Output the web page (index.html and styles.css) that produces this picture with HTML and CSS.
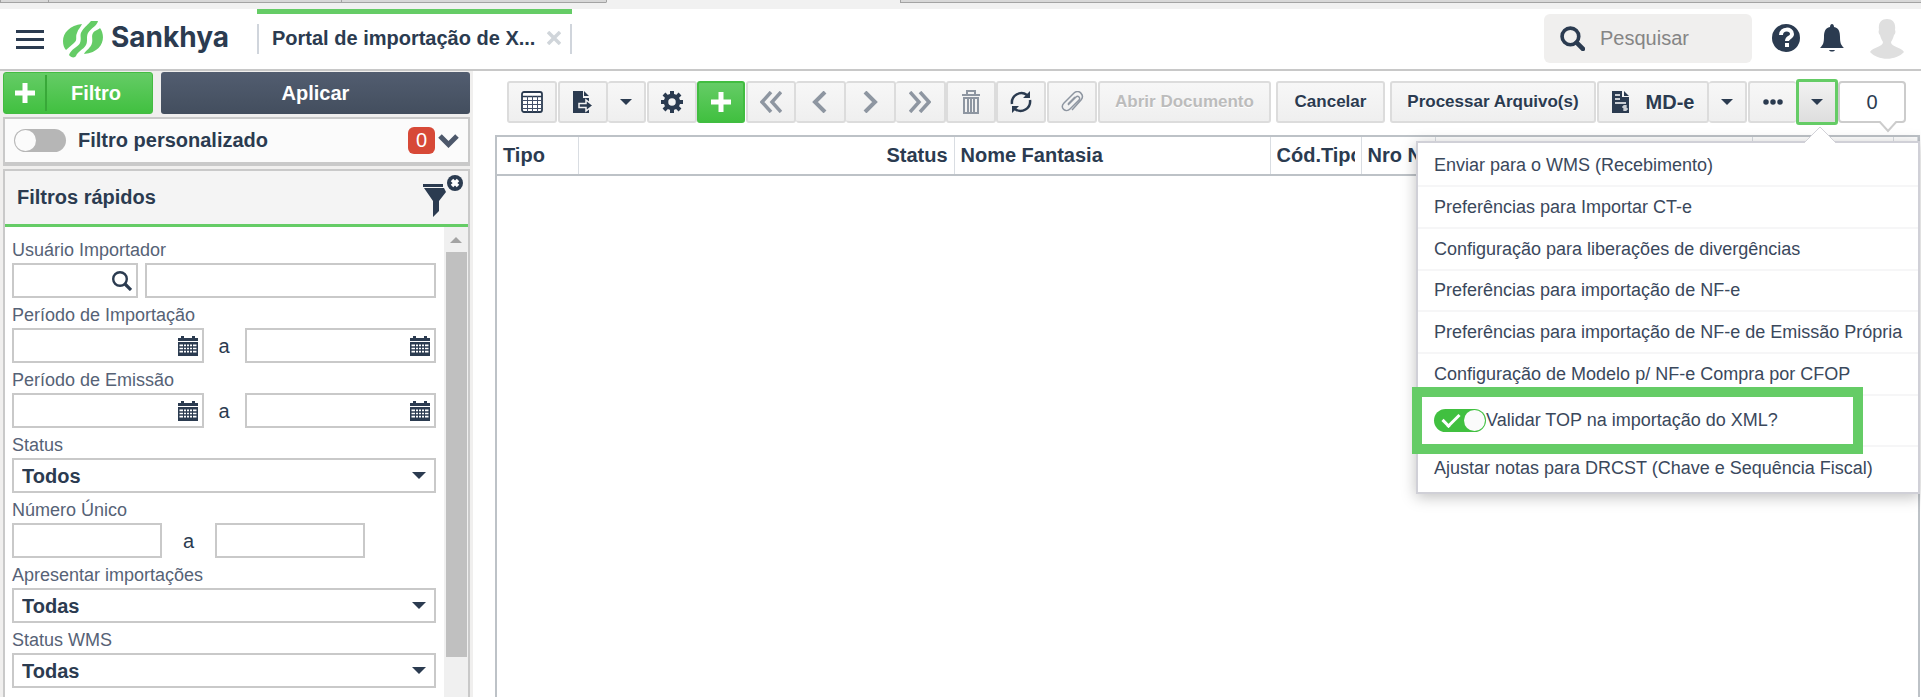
FILE: index.html
```html
<!DOCTYPE html>
<html lang="pt-BR">
<head>
<meta charset="utf-8">
<title>Portal de importação de XML</title>
<link rel="stylesheet" href="styles.css">
</head>
<body>
<svg class="sprite" aria-hidden="true">
  <symbol id="calendar" viewBox="0 0 20 20"><path fill="currentColor" d="M0 2h3V0h3v2h8V0h3v2h3v3H0zM0 6h20v14H0z"/><path stroke="#fff" d="M1.500 9.500h17M1.500 12.500h17M1.500 15.500h17" stroke-width="2"/><path stroke="currentColor" d="M5.500 8v10M8.500 8v10M11.500 8v10M14.500 8v10M1 11h18M1 14h18"/></symbol>
  <symbol id="search" viewBox="0 0 24 24"><circle cx="10" cy="10" r="8" fill="none" stroke="currentColor" stroke-width="3.500"/><path d="m16 16 6 6" stroke="currentColor" stroke-width="4.500" stroke-linecap="round"/></symbol>
  <symbol id="lookup" viewBox="0 0 20 20"><circle cx="8" cy="8" r="6.800" fill="none" stroke="currentColor" stroke-width="2.400"/><path d="m13 13 6 6" stroke="currentColor" stroke-width="3.200"/></symbol>
  <symbol id="caret" viewBox="0 0 12 6"><path d="M0 0h12L6 6z" fill="currentColor"/></symbol>
  <symbol id="plus" viewBox="0 0 22 22"><path d="M11 1v20M1 11h20" stroke="currentColor" stroke-width="5"/></symbol>
</svg>
<div class="window-edge"><span></span><span></span><span></span><span></span><span></span></div>
<header class="topbar">
  <button class="menu" aria-label="Menu"><i></i><i></i><i></i></button>
  <a class="brand" href="#">
    <svg width="42" height="38" viewBox="0 0 42 38" aria-hidden="true"><g fill="#65cc66"><path d="M20 4C8 5 1 13 1 21c0 4 1 7 3 9l8-7c4-3 1-6 3-10 1-4 4-6 5-9z"/><path d="M29 1h7c-1 5-7 7-10 12-2 4 0 8-2 12-3 5-8 6-10 11-1 2-5 2-7-1 2-6 9-8 11-12 2-5-1-8 2-12 3-5 6-6 9-10z"/><path d="M38 8c6 8 4 24-16 26 2-4 7-6 8-11 1-4-1-7 1-10s5-3 7-5z"/></g></svg>
    <span>Sankhya</span>
  </a>
  <div class="tab"><div class="tab-body"><span>Portal de importação de X...</span><button aria-label="Fechar aba"><svg width="14" height="14" viewBox="0 0 14 14"><path d="m1 1 12 12M13 1 1 13" stroke="#d0d5da" stroke-width="3.500"/></svg></button></div></div>
  <label class="search"><svg width="25" height="25" aria-hidden="true"><use href="#search"/></svg><input type="text" placeholder="Pesquisar" aria-label="Pesquisar"></label>
  <button class="top-icon" aria-label="Ajuda"><svg width="28" height="28" viewBox="0 0 28 28"><circle cx="14" cy="14" r="14" fill="#2b3b50"/><path d="M9 11c0-7 11-7 11-1 0 4-5 3-5 7" fill="none" stroke="#fff" stroke-width="4"/><path d="M13 19h4v4h-4z" fill="#fff"/></svg></button>
  <button class="top-icon" aria-label="Notificações"><svg width="24" height="28" viewBox="0 0 24 28"><path fill="#2b3b50" d="M10 3c0-4 4-4 4 0 5 1 6 5 6 10 0 6 1 8 4 11H0c3-3 4-5 4-11C4 8 5 4 10 3zM9 26h6c-1 2-5 2-6 0z"/></svg></button>
  <button class="avatar" aria-label="Usuário"><svg width="34" height="40" viewBox="0 0 34 40"><path fill="#dfdfdf" d="M17 0c6 0 9 4 8 11 1 2 0 4-1 5-1 4-2 5-3 7 0 5 10 5 13 10-8 9-26 9-34 0 3-5 13-5 13-10-1-2-2-3-3-7-1-1-2-3-1-5C8 4 11 0 17 0z"/></svg></button>
</header>
<div class="workspace">
  <aside class="sidebar">
    <div class="actions">
      <button class="add-filter"><svg width="22" height="22" aria-hidden="true"><use href="#plus"/></svg><span>Filtro</span></button>
      <button class="apply">Aplicar</button>
    </div>
    <section class="custom-filter">
      <input type="checkbox" class="switch" id="custom"><label for="custom">Filtro personalizado</label>
      <span class="count">0</span>
      <svg width="21" height="15" viewBox="0 0 21 15"><path d="m2 3 8.500 8.500L19 3" fill="none" stroke="#4d586b" stroke-width="5"/></svg>
    </section>
    <section class="quick">
      <header class="quick-head"><h2>Filtros rápidos</h2>
        <button aria-label="Limpar filtros"><svg width="40" height="42" viewBox="0 0 40 42"><path fill="#2b3b50" d="M0 9h20v3H0zM1 13h20l2 4-7 9v10l-6 6V26z"/><circle cx="32" cy="8" r="8" fill="#2b3b50"/><path d="m29 5 6 6m0-6-6 6" stroke="#fff" stroke-width="3.500"/></svg></button>
      </header>
      <div class="quick-body">
        <form class="fields">
          <div class="field"><label for="user">Usuário Importador</label>
            <div class="row lookup"><span class="box code"><input id="user" type="text"><svg width="20" height="20"><use href="#lookup"/></svg></span><span class="box"><input type="text" aria-label="Nome do usuário"></span></div></div>
          <div class="field"><label for="imp">Período de Importação</label>
            <div class="row range"><span class="box"><input id="imp" type="text"><svg width="20" height="20"><use href="#calendar"/></svg></span><span class="to">a</span><span class="box"><input type="text" aria-label="Importação até"><svg width="20" height="20"><use href="#calendar"/></svg></span></div></div>
          <div class="field"><label for="emi">Período de Emissão</label>
            <div class="row range"><span class="box"><input id="emi" type="text"><svg width="20" height="20"><use href="#calendar"/></svg></span><span class="to">a</span><span class="box"><input type="text" aria-label="Emissão até"><svg width="20" height="20"><use href="#calendar"/></svg></span></div></div>
          <div class="field"><label for="status">Status</label>
            <div class="box select"><select id="status"><option>Todos</option></select><svg width="14" height="7"><use href="#caret"/></svg></div></div>
          <div class="field"><label for="num">Número Único</label>
            <div class="row number"><span class="box"><input id="num" type="text"></span><span class="to">a</span><span class="box"><input type="text" aria-label="Número até"></span></div></div>
          <div class="field"><label for="show">Apresentar importações</label>
            <div class="box select"><select id="show"><option>Todas</option></select><svg width="14" height="7"><use href="#caret"/></svg></div></div>
          <div class="field"><label for="wms">Status WMS</label>
            <div class="box select"><select id="wms"><option>Todas</option></select><svg width="14" height="7"><use href="#caret"/></svg></div></div>
        </form>
        <div class="scrollbar"><svg width="12" height="6" viewBox="0 0 12 6"><path d="M0 6h12L6 0z" fill="#a3a3a3"/></svg><div class="thumb"></div></div>
      </div>
    </section>
  </aside>
  <main class="content">
    <div class="toolbar">
      <button class="btn w50 spaced" aria-label="Grade"><svg width="22" height="22" viewBox="0 0 22 22"><rect x="1" y="1" width="20" height="20" rx="2" fill="#fff" stroke="#2b3b50" stroke-width="1.800"/><path d="M1 5.500h20" stroke="#2b3b50" stroke-width="1.500"/><path d="M1 9.500h20M1 13.500h20M1 17.500h20M6.500 5v16M11.500 5v16M16.500 5v16" stroke="#43506a"/></svg></button>
      <div class="group spaced"><button class="btn w50" aria-label="Exportar"><svg width="22" height="22" viewBox="0 0 22 22"><path fill="#2b3b50" d="M1 0h10v7h6v15H1zM12 0l5 5h-5z"/><path fill="#2b3b50" stroke="#f4f4f4" stroke-width="1.500" d="M7 12.500h7V9l7 5.500-7 5.500v-3.500H7z"/></svg></button><button class="btn w38" aria-label="Opções de exportação"><svg width="12" height="6"><use href="#caret"/></svg></button></div>
      <button class="btn w50" aria-label="Configurações"><svg width="22" height="22" viewBox="0 0 22 22"><g fill="none" stroke="#2b3b50"><circle cx="11" cy="11" r="6" stroke-width="4.500"/><path stroke-width="4" d="M11 0v4M11 18v4M0 11h4M18 11h4M3 3l3 3M16 16l3 3M19 3l-3 3M6 16l-3 3"/></g></svg></button>
      <button class="btn green" aria-label="Adicionar"><svg width="22" height="22"><use href="#plus"/></svg></button>
      <div class="group nav">
        <button class="btn w50" aria-label="Primeiro"><svg width="22" height="22" viewBox="0 0 22 22"><path d="M11 1 2 11l9 10M21 1l-9 10 9 10" fill="none" stroke="#8e96a1" stroke-width="3.500"/></svg></button>
        <button class="btn w50" aria-label="Anterior"><svg width="22" height="22" viewBox="0 0 22 22"><path d="M16 1 6 11l10 10" fill="none" stroke="#8e96a1" stroke-width="4"/></svg></button>
        <button class="btn w50" aria-label="Próximo"><svg width="22" height="22" viewBox="0 0 22 22"><path d="m6 1 10 10L6 21" fill="none" stroke="#8e96a1" stroke-width="4"/></svg></button>
        <button class="btn w50" aria-label="Último"><svg width="22" height="22" viewBox="0 0 22 22"><path d="m1 1 9 10-9 10M11 1l9 10-9 10" fill="none" stroke="#8e96a1" stroke-width="3.500"/></svg></button>
      </div>
      <button class="btn w50" aria-label="Excluir"><svg width="18" height="24" viewBox="0 0 18 24"><path fill="none" stroke="#8e96a1" stroke-width="2" d="M5 4V1h8v3M0 5h18M2 8v15h14V8zM6 8v15M9 8v15M12 8v15"/></svg></button>
      <button class="btn w50 spaced" aria-label="Atualizar"><svg width="22" height="22" viewBox="0 0 22 22"><path d="M2 13A9.500 9.500 0 0 1 17 4M20 9A9.500 9.500 0 0 1 5 18" fill="none" stroke="#2b3b50" stroke-width="2.500"/><path fill="#2b3b50" d="M20 0v7h-7zM2 22v-7h7z"/></svg></button>
      <button class="btn w50 spaced" aria-label="Anexar"><svg width="24" height="22" viewBox="0 0 24 22"><path d="m8 14 8-8c2-2 5 1 3 3l-9 9c-4 4-11-1-6-6L14 2c5-4 11 2 7 7l-9 10M8 13l7-7" fill="none" stroke="#8e96a1" stroke-width="1.500"/></svg></button>
      <button class="btn text open" disabled>Abrir Documento</button>
      <button class="btn text cancel">Cancelar</button>
      <button class="btn text process">Processar Arquivo(s)</button>
      <div class="group spaced"><button class="btn mde"><svg width="18" height="22" viewBox="0 0 18 22"><path fill="#2b3b50" d="M0 0h10v6h7v16H0zM12 0l5 5h-5z"/><path d="M3 4h5M3 8h5M3 12h11" stroke="#fff" stroke-width="1.500"/><path d="M15 15h-4v2h4v2h-4M13 14v6" fill="none" stroke="#fff"/></svg><span>MD-e</span></button><button class="btn w38" aria-label="Opções MD-e"><svg width="12" height="6"><use href="#caret"/></svg></button></div>
      <div class="group"><button class="btn more" aria-label="Mais ações"><svg width="20" height="6" viewBox="0 0 20 6"><path d="M3 3h0M10 3h0M17 3h0" stroke="#2b3b50" stroke-width="5.500" stroke-linecap="round"/></svg></button>
        <div class="drop"><button class="btn active" aria-label="Abrir menu"><svg width="12" height="6"><use href="#caret"/></svg></button>
          <div class="popup">
            <svg class="arrow" width="32" height="17" viewBox="0 0 32 17"><path d="m0 17 16-16 16 16" fill="#fff" stroke="#d2d2d8"/></svg>
            <ul>
              <li>Enviar para o WMS (Recebimento)</li>
              <li>Preferências para Importar CT-e</li>
              <li>Configuração para liberações de divergências</li>
              <li>Preferências para importação de NF-e</li>
              <li>Preferências para importação de NF-e de Emissão Própria</li>
              <li>Configuração de Modelo p/ NF-e Compra por CFOP</li>
              <li class="toggle-row"><input type="checkbox" class="switch on" id="top" checked><label for="top">Validar TOP na importação do XML?</label></li>
              <li>Ajustar notas para DRCST (Chave e Sequência Fiscal)</li>
            </ul>
          </div></div></div>
      <div class="counter">0<svg width="20" height="12" viewBox="0 0 20 12"><path d="m1 0 9 10 9-10" fill="#fff" stroke="#ccc" stroke-width="2"/></svg></div>
    </div>
    <div class="grid">
      <table><thead><tr><th class="c1">Tipo</th><th class="c2">Status</th><th class="c3">Nome Fantasia</th><th class="c4"><div>Cód.Tipo</div></th><th class="c5"><div>Nro N</div></th><th class="c6"></th><th class="c7"></th><th></th></tr></thead></table>
    </div>
  </main>
</div>
</body>
</html>
```
FILE: styles.css
```css
* { box-sizing: border-box; }
body { margin: 0; height: 100vh; display: flex; flex-direction: column; overflow: hidden; background: #fff; color: #2b3b50; font-family: "Liberation Sans", Arial, sans-serif; font-size: 18px; }
button, input, select { font: inherit; color: inherit; }
button { border: 0; padding: 0; background: none; }
svg { display: block; flex: none; }
.sprite { position: absolute; width: 0; height: 0; }
.window-edge { flex: none; display: grid; grid-template-columns: 48px 293px 265px 294px 1fr; height: 9px; background: #f1f1f1; }
.window-edge span { height: 3px; background: #d8d8d8; border-bottom: 1px solid #a3a3a3; border-left: 1px solid #a3a3a3; }
.window-edge span:nth-child(4) { background: #f1f1f1; border-bottom-color: #f1f1f1; }
.topbar { flex: none; height: 62px; border-bottom: 2px solid #c8c8c8; display: flex; align-items: center; padding: 0 17px 0 16px; }
.menu { width: 28px; display: grid; gap: 5px; }
.menu i { height: 3px; background: #2b3b50; }
.brand { display: flex; align-items: center; gap: 7px; margin-left: 18px; width: 195px; color: #2b3b50; text-decoration: none; font: 700 28px/32px "Inter", sans-serif; }
.brand span { padding-bottom: 4px; }
.tab { align-self: flex-start; width: 315px; border-top: 5px solid #65cc66; padding-top: 10px; }
.tab-body { height: 30px; border: solid #d0d5dc; border-width: 0 2px; padding: 0 9px 2px 13px; display: flex; align-items: center; justify-content: space-between; font-size: 20px; font-weight: bold; white-space: nowrap; }
.search { margin: 0 0 2px auto; width: 208px; height: 49px; border-radius: 6px; background: #f0efee; display: flex; align-items: center; padding: 0 16px; gap: 15px; }
.search input { min-width: 0; width: 100%; border: 0; padding: 0; background: none; font-size: 20px; }
.search input::placeholder { color: #858585; }
.top-icon { margin: 0 0 3px 20px; }
.avatar { margin-left: 26px; }
.workspace { flex: 1; min-height: 0; display: flex; }
.sidebar { flex: none; width: 473px; background: #f0efee; padding: 1px 3px 0; display: flex; flex-direction: column; gap: 3px; }
.actions { display: flex; gap: 8px; height: 42px; color: #fff; font-size: 20px; font-weight: bold; }
.add-filter { width: 150px; border-radius: 3px; border: 1px solid #44bb42; background: linear-gradient(#65cc66, #41c040); display: flex; align-items: center; padding: 0 7px 0 10px; }
.add-filter span { flex: 1; height: 36px; line-height: 36px; margin-left: 9px; border-left: 2px solid #38a838; }
.apply { flex: 1; border-radius: 3px; background: linear-gradient(#525d70, #434e5e); }
.custom-filter { height: 49px; border: 2px solid #c9c9c9; background: #fbfbfb; box-shadow: inset 0 -2px #c9c9c9; display: flex; align-items: center; padding: 0 9px 2px; font-size: 20px; font-weight: bold; }
.custom-filter label { margin-left: 12px; margin-right: auto; }
.switch { appearance: none; flex: none; width: 52px; height: 23px; border-radius: 12px; margin: 0; background: #b6b6b6; padding: 1px; }
.switch::before { content: ""; display: block; width: 21px; height: 21px; border-radius: 50%; background: #fbfbfb; }
.switch.on { background: #41c040; display: flex; align-items: center; justify-content: space-between; flex-direction: row-reverse; }
.switch.on::after { content: ""; width: 7px; height: 14px; margin: 0 0 4px 11px; border: solid #fff; border-width: 0 3px 3px 0; transform: rotate(45deg); }
.count { width: 27px; height: 27px; line-height: 26px; border-radius: 6px; background: #d74937; color: #fff; text-align: center; font-weight: normal; margin-right: 3px; }
.quick { flex: 1; min-height: 0; border: 2px solid #c9c9c9; border-bottom: 0; display: flex; flex-direction: column; background: #fff; }
.quick-head { flex: none; height: 56px; background: #f4f4f4; border-bottom: 3px solid #65cc66; display: flex; justify-content: space-between; align-items: center; padding: 0 5px 0 12px; }
.quick-head h2 { margin: 0; font-size: 20px; }
.quick-head button { padding-bottom: 3px; }
.quick-body { flex: 1; min-height: 0; display: flex; overflow: hidden; }
.fields { flex: 1; padding: 12px 8px 0 7px; }
.field { height: 65px; display: flex; flex-direction: column; gap: 2px; }
.field label { line-height: 22px; color: #566276; }
.row { display: flex; align-items: center; }
.box { flex: 1; height: 35px; border: 2px solid #c9c9c9; background: #fff; display: flex; align-items: center; padding-right: 4px; }
.box input { flex: 1; min-width: 0; width: 100%; height: 28px; border: 0; background: none; padding: 0 6px; outline: 0; }
.lookup { gap: 7px; }
.code { flex: 0 0 126px; }
.to { width: 41px; text-align: center; font-size: 20px; line-height: 30px; }
.number .box { flex: 0 0 150px; }
.number .to { width: 53px; }
.select { flex: none; padding-right: 8px; }
.select select { flex: 1; appearance: none; border: 0; background: none; padding: 0 8px; font-size: 20px; font-weight: bold; }
.scrollbar { width: 24px; background: #f0f0f0; display: flex; flex-direction: column; align-items: center; padding: 10px 1px 0; gap: 9px; }
.thumb { width: 21px; height: 405px; background: #c0c0c0; }
.content { flex: 1; min-width: 0; display: flex; flex-direction: column; padding: 10px 1px 0 22px; }
.toolbar { flex: none; height: 42px; margin: 0 14px 12px 12px; display: flex; align-items: stretch; }
.group { display: flex; }
.group > .btn + .btn { border-left-width: 0; }
.btn { display: flex; align-items: center; justify-content: center; border: 2px solid #dcdcdc; border-radius: 3px; background: linear-gradient(#f7f7f7, #efefef); font-weight: bold; white-space: nowrap; text-shadow: 0 1px #fff; }
.spaced { margin-right: 1px; }
.w50 { width: 50px; }
.w38 { width: 38px; }
.green { width: 48px; margin-right: 1px; color: #fff; border-color: #41bd40; background: linear-gradient(#65cc66, #41c040); }
.text { font-size: 17px; }
.open { width: 173px; color: #bcbcbc; }
.cancel { width: 109px; margin: 0 5px; }
.process { width: 206px; margin-right: 1px; }
.mde { width: 112px; gap: 16px; font-size: 20px; }
.more { width: 48px; border-right: 0; }
.drop { position: relative; display: flex; }
.active { width: 42px; height: 46px; margin-top: -2px; border: 3px solid #65cc66; background: linear-gradient(#f2f2f2, #dedede); }
.counter { position: relative; flex: 1; border: 2px solid #ccc; border-radius: 4px; background: #fff; text-align: center; line-height: 38px; font-size: 20px; }
.counter svg { position: absolute; right: 6px; top: 38px; }
.popup { position: absolute; z-index: 2; right: -82px; top: 60px; width: 504px; border: 2px solid #d0d0d7; background: #fff; box-shadow: 0 3px 14px rgba(0,0,0,.25); color: #3a485c; }
.arrow { position: absolute; right: 82px; top: -17px; }
.popup ul { margin: 0; padding: 2px 0 3px; list-style: none; }
.popup li { height: 42px; display: flex; align-items: center; padding: 0 16px; border-bottom: 2px solid #f6f6f7; white-space: nowrap; }
.popup li:nth-child(4) { height: 41px; }
.popup li:last-child { border: 0; }
.popup .toggle-row { position: relative; height: 51px; }
.toggle-row::after { content: ""; position: absolute; inset: -9px 55px -9px -6px; border: 10px solid #65cc66; }
.grid { flex: 1; border: 2px solid #bdc2c7; border-bottom: 0; }
table { width: 100%; border-collapse: collapse; table-layout: fixed; }
th { height: 38px; padding: 0 6px; border-right: 1px solid #d9dde2; border-bottom: 2px solid #bdc2c7; font-size: 20px; text-align: left; white-space: nowrap; }
th div { overflow: hidden; }
.c1 { width: 81px; }
.c2 { width: 376px; text-align: right; }
.c3 { width: 316px; }
.c4 { width: 91px; }
.c5 { width: 74px; }
.c6 { width: 317px; }
.c7 { width: 141px; }
```
